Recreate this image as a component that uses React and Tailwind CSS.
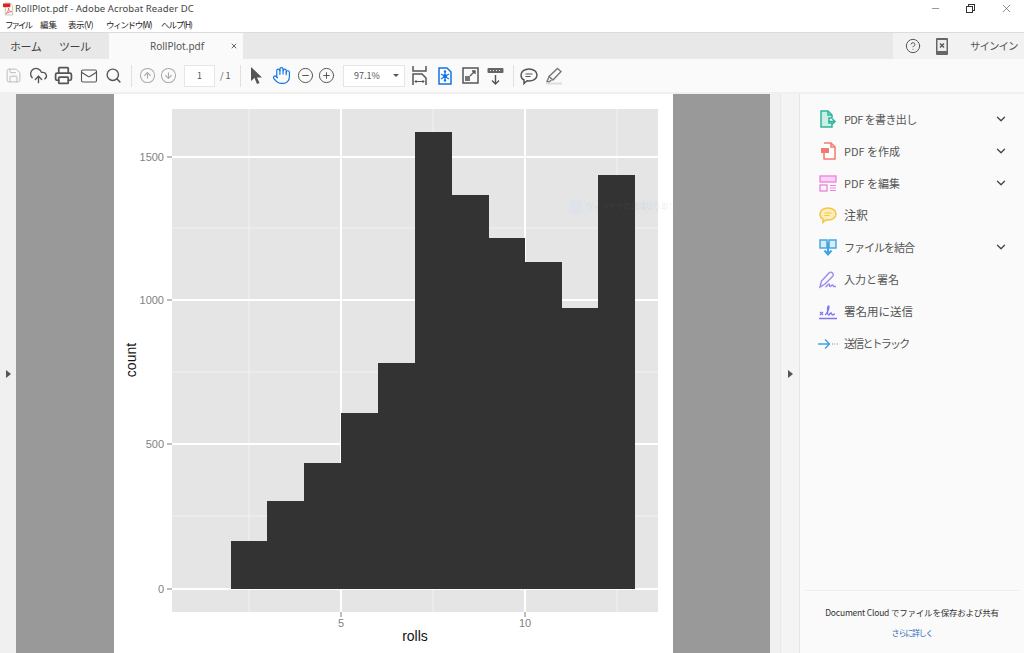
import { Save, CloudUpload, Printer, Mail, Search, CircleArrowUp, CircleArrowDown, Hand, CircleMinus, CirclePlus, CircleHelp, ChevronDown, Minus, X } from 'lucide-react'

const font = "font-['Noto_Sans_CJK_JP','Noto_Sans',sans-serif]"

const bars = [
  [231, 541], [267, 501], [304, 463], [341, 413], [378, 363], [415, 132],
  [452, 195], [489, 238], [525, 262], [562, 308], [598, 175],
]
const barEnds = [267, 304, 341, 378, 415, 452, 489, 525, 562, 598, 635]

function Chart() {
  // svg origin sits at page x=114, y=94
  const ox = 114
  const oy = 94
  return (
    <svg width="559" height="559" viewBox={`${ox} ${oy} 559 559`} className="block">
      <rect x="172" y="109" width="486" height="503" fill="#e5e5e5" />
      {[516, 372, 228].map(y => <line key={y} x1="172" x2="658" y1={y} y2={y} stroke="#f2f2f2" strokeWidth="1" />)}
      {[249, 433, 617].map(x => <line key={x} x1={x} x2={x} y1="109" y2="612" stroke="#f2f2f2" strokeWidth="1" />)}
      {[589, 444, 300, 157].map(y => <line key={y} x1="172" x2="658" y1={y} y2={y} stroke="#fff" strokeWidth="2" />)}
      {[341, 525].map(x => <line key={x} x1={x} x2={x} y1="109" y2="612" stroke="#fff" strokeWidth="2" />)}
      {/* faded window-snip tooltip left in the capture */}
      <rect x="568" y="200" width="90" height="14" fill="#e2e4e6" />
      <rect x="570" y="201" width="12" height="12" fill="#dde3e8" />
      {bars.map(([x, top], i) => (
        <rect key={x} x={x} y={top} width={barEnds[i] - x} height={589 - top} fill="#333333" />
      ))}
      <g className="opacity-[0.99]">
        {[[589, '0'], [444, '500'], [300, '1000'], [157, '1500']].map(([y, t]) => (
          <g key={t}>
            <line x1="167" x2="172" y1={y} y2={y} stroke="#7f7f7f" strokeWidth="1" />
            <text x="164" y={y + 4} textAnchor="end" fontSize="11" fill="#7f7f7f" fontFamily="Liberation Sans, sans-serif">{t}</text>
          </g>
        ))}
        {[[341, '5'], [525, '10']].map(([x, t]) => (
          <g key={t}>
            <line x1={x} x2={x} y1="612" y2="617" stroke="#7f7f7f" strokeWidth="1" />
            <text x={x} y="627" textAnchor="middle" fontSize="11" fill="#7f7f7f" fontFamily="Liberation Sans, sans-serif">{t}</text>
          </g>
        ))}
        <text x="415" y="641" textAnchor="middle" fontSize="14" fill="#111" fontFamily="Liberation Sans, sans-serif">rolls</text>
        <text transform="translate(136 360) rotate(-90)" textAnchor="middle" fontSize="14" fill="#111" fontFamily="Liberation Sans, sans-serif">count</text>
      </g>
    </svg>
  )
}

function PdfIcon() {
  return (
    <svg width="12" height="14" viewBox="0 0 12 14" fill="none">
      <path d="M2.5.5h5l3 3v10h-8z" fill="#fff" stroke="#bdbdbd" />
      <rect x="0" y="1" width="8" height="4" fill="#d8261c" />
      <path d="M3.5 12c1.5-1 2.500-3.500 2.500-6 .5 2.500 1.500 3.500 3.500 4-2 0-4 .5-6 2z" stroke="#e0483e" strokeWidth=".8" />
    </svg>
  )
}

function FitWidth() {
  return (
    <svg width="16" height="20" viewBox="0 0 16 20" fill="none" stroke="#555" strokeWidth="1.500">
      <path d="M1 0v5h13V0" />
      <path d="M1 19V8h9l4 4v7" />
      <path d="M3 15.500h9M3 15.500l1.500-1.500M3 15.500l1.500 1.500M12 15.500l-1.500-1.500M12 15.500l-1.500 1.500" strokeWidth="1" />
    </svg>
  )
}

function SnapIcon() {
  return (
    <svg width="14" height="18" viewBox="0 0 14 18" fill="none">
      <path d="M1 1h8l4 4v12H1z" fill="#fff" stroke="#1473e6" strokeWidth="1.500" />
      <path d="M7 4v10M3 7l8 5M11 7l-8 5" stroke="#1473e6" strokeWidth="1.200" />
      <circle cx="7" cy="9" r="2" fill="#1473e6" />
      <circle cx="7" cy="4.500" r="1.200" fill="#1473e6" />
      <circle cx="7" cy="13.500" r="1.200" fill="#1473e6" />
    </svg>
  )
}

function FullScreen() {
  return (
    <svg width="17" height="17" viewBox="0 0 17 17" fill="none">
      <rect x="1" y="1" width="15" height="15" stroke="#555" strokeWidth="1.500" />
      <rect x="3" y="9" width="5" height="5" fill="#777" />
      <path d="M8 9l5-5M10 4h3v3" stroke="#555" strokeWidth="1.300" />
    </svg>
  )
}

function ReadIcon() {
  return (
    <svg width="17" height="18" viewBox="0 0 17 18" fill="none">
      <rect x="0.500" y="1" width="16" height="5" rx="1" fill="#666" />
      <path d="M3 3.500h1M6 3.500h1M9 3.500h1M12 3.500h1" stroke="#eee" />
      <path d="M8.500 8v9M5 13.500l3.500 3.500 3.500-3.500" stroke="#555" strokeWidth="1.400" />
    </svg>
  )
}

function CommentIcon({ color = '#555', fill = 'none', size = 18 }) {
  return (
    <svg width={size} height={size} viewBox="0 0 18 18" fill={fill} stroke={color} strokeWidth="1.500">
      <path d="M9 2c4.400 0 8 2.400 8 6s-3.600 6-8 6c-.8 0-1.500 0-2-.2L4 16.500V13C2 12 1 10 1 8c0-3.600 3.600-6 8-6z" />
      <path d="M5.500 7h7M5.500 9.500h5" strokeWidth="1.200" />
    </svg>
  )
}

function HighlightIcon() {
  return (
    <svg width="18" height="18" viewBox="0 0 18 18" fill="none">
      <path d="M12.500 1.500l3.500 3-8 8.500-4-3.500z" stroke="#777" strokeWidth="1.400" />
      <path d="M4 10l-2 4.500 2 .5 2.500-2" stroke="#777" strokeWidth="1.400" />
      <rect x="1" y="15.500" width="16" height="2" fill="#ddd" />
    </svg>
  )
}

function PhoneIcon() {
  return (
    <svg width="12" height="17" viewBox="0 0 12 17" fill="none">
      <rect x="0" y="0" width="12" height="17" rx="1" fill="#666" />
      <rect x="1.500" y="2" width="9" height="11" fill="#eee" />
      <path d="M4 5.500l4 4M8 5.500l-4 4" stroke="#555" strokeWidth="1.400" />
    </svg>
  )
}

function ExportIcon() {
  return (
    <svg width="16" height="18" viewBox="0 0 16 18" fill="none">
      <path d="M1 1h7l4 4v3H9v5h3v4H1z" fill="#cdeee4" stroke="#2fb59a" strokeWidth="1.500" />
      <path d="M8 1v4h4" stroke="#2fb59a" strokeWidth="1.500" />
      <path d="M8 11.500h7M12.500 9l2.500 2.500-2.500 2.500" stroke="#2fb59a" strokeWidth="1.500" />
    </svg>
  )
}

function CreateIcon() {
  return (
    <svg width="15" height="18" viewBox="0 0 15 18" fill="none">
      <path d="M3 1h7l4 4v12H3v-6" fill="#fff" stroke="#f47b6c" strokeWidth="1.500" />
      <path d="M10 1v4h4" stroke="#f47b6c" strokeWidth="1.500" />
      <rect x="0" y="6" width="8" height="5" fill="#f47b6c" />
    </svg>
  )
}

function EditIcon() {
  return (
    <svg width="18" height="17" viewBox="0 0 18 17" fill="none" stroke="#f07fe0" strokeWidth="1.300">
      <rect x="1" y="1" width="16" height="6" fill="#fbd3f5" />
      <rect x="1" y="10" width="7" height="6" />
      <path d="M11 10.500h6M11 13h6M11 15.500h6" strokeWidth="1" />
    </svg>
  )
}

function CombineIcon() {
  return (
    <svg width="18" height="18" viewBox="0 0 18 18" fill="none">
      <rect x="1" y="2" width="7" height="8" fill="#d5ecfa" stroke="#3ea3e0" strokeWidth="1.400" />
      <rect x="10" y="2" width="7" height="8" fill="#d5ecfa" stroke="#3ea3e0" strokeWidth="1.400" />
      <path d="M9 4v12M5.500 12.500L9 16.500l3.500-4" stroke="#3ea3e0" strokeWidth="2" />
    </svg>
  )
}

function SignIcon() {
  return (
    <svg width="18" height="18" viewBox="0 0 18 18" fill="none" stroke="#9b86f0" strokeWidth="1.400">
      <path d="M1 16l1.500-6L10 2c1-1 2.500-1 3.500 0s1 2.500 0 3.500L6 13z" />
      <path d="M6.500 16c1.500-.5 2.500-3 3.500-3s0 2.500 1 2.500 1.500-1.500 2.500-1.500.5 1.500 1.500 1.500h2" />
    </svg>
  )
}

function SendSignIcon() {
  return (
    <svg width="18" height="16" viewBox="0 0 18 16" fill="none" stroke="#8076ee" strokeWidth="1.300">
      <path d="M1 8l3 3M4 8l-3 3" />
      <path d="M6 11c2-1 4-6 4-8s-1.500-1-1.500 2 0 6 1 6 1.500-2 2.500-2 .5 2 1.500 2 1.500-1 2.500-1" />
      <path d="M0 14.500h18" strokeWidth="1.500" />
    </svg>
  )
}

function TrackIcon() {
  return (
    <svg width="20" height="12" viewBox="0 0 20 12" fill="none">
      <path d="M0 6h11M7 1.500L11.500 6 7 10.500" stroke="#3ea3e0" strokeWidth="1.400" />
      <path d="M14 6h1M16.500 6h1M19 6h1" stroke="#8a8a8a" />
    </svg>
  )
}

const tools = [
  { icon: <ExportIcon />, label: 'PDF を書き出し', more: true, text: 'text-[11px] tracking-[-0.6px]' },
  { icon: <CreateIcon />, label: 'PDF を作成', more: true, text: 'text-[11px]' },
  { icon: <EditIcon />, label: 'PDF を編集', more: true, text: 'text-[11px]' },
  { icon: <CommentIcon color="#f5c445" fill="#fdeebc" />, label: '注釈', text: 'text-[12px]' },
  { icon: <CombineIcon />, label: 'ファイルを結合', more: true, text: 'text-[11px] tracking-[-1px]' },
  { icon: <SignIcon />, label: '入力と署名', text: 'text-[11px]' },
  { icon: <SendSignIcon />, label: '署名用に送信', text: 'text-[11.500px]' },
  { icon: <TrackIcon />, label: '送信とトラック', text: 'text-[11px] tracking-[-1.800px]' },
]

function Divider() {
  return <div className="w-px h-[22px] bg-[#e0e0e0]" />
}

export default function App() {
  return (
    <div className={`${font} w-[1024px] h-[653px] overflow-hidden bg-white flex flex-col text-[#505050]`}>
      {/* Title bar */}
      <div className="h-[17px] flex items-center">
        <div className="ml-[3px] w-[11px] flex justify-center"><PdfIcon /></div>
        <span className="ml-[1px] font-['Noto_Sans',sans-serif] text-[9.500px] tracking-[0.1px] text-[#444] leading-none">RollPlot.pdf - Adobe Acrobat Reader DC</span>
        <div className="ml-auto flex items-center text-[#444]">
          <Minus size={11} strokeWidth={1.200} className="mr-[25px]" />
          <div className="relative w-[9px] h-[9px] mr-[25px]">
            <div className="absolute left-0 bottom-0 w-[7px] h-[7px] border border-[#333] bg-white z-10" />
            <div className="absolute right-0 top-0 w-[7px] h-[7px] border border-[#333]" />
          </div>
          <X size={13} strokeWidth={1.100} className="mr-[11px]" />
        </div>
      </div>

      {/* Menu bar */}
      <div className="h-[15px] flex items-center pl-[5px] text-[8.500px] text-[#222] leading-none whitespace-nowrap">
        <span className="w-[35px] tracking-[-2px]">ファイル</span>
        <span className="w-[28px]">編集</span>
        <span className="w-[38px] tracking-[-0.500px]">表示(V)</span>
        <span className="w-[55px] tracking-[-1.300px]">ウィンドウ(W)</span>
        <span className="tracking-[-1.100px]">ヘルプ(H)</span>
      </div>

      {/* Tab bar */}
      <div className="h-[27px] flex bg-[#e8e8e8] border-t border-[#dcdcdc]">
        <div className="w-[109px] flex items-center pl-[10px] text-[11px] tracking-[-0.500px] text-[#444] leading-none">
          <span className="w-[49px]">ホーム</span>
          <span>ツール</span>
        </div>
        <div className="w-[134px] bg-[#fafafa] flex items-center text-[10px] text-[#555]">
          <span className="ml-[41px] font-['Noto_Sans',sans-serif]">RollPlot.pdf</span>
          <X size={8} strokeWidth={2.500} className="ml-auto mr-[5px] text-[#444]" />
        </div>
        <div className="flex-1" />
        <div className="w-[131px] bg-[#f2f2f2] flex items-center">
          <CircleHelp size={16} strokeWidth={1.500} className="ml-[12px] text-[#555]" />
          <div className="ml-[15px]"><PhoneIcon /></div>
          <span className="ml-[22px] text-[10.500px] tracking-[-1px] text-[#555] leading-none whitespace-nowrap">サインイン</span>
        </div>
      </div>

      {/* Toolbar */}
      <div className="h-[35px] bg-[#fafafa] border-b-2 border-[#f0f0f0] flex items-center text-[#555]">
        <Save size={17} strokeWidth={1.400} className="ml-[5px] text-[#bbb]" />
        <CloudUpload size={19} strokeWidth={1.700} className="ml-[7px]" />
        <Printer size={19} strokeWidth={2.200} className="ml-[6px]" />
        <Mail size={18} strokeWidth={1.500} className="ml-[7px]" />
        <Search size={17} strokeWidth={2} className="ml-[7px]" />
        <div className="ml-[9px]"><Divider /></div>
        <CircleArrowUp size={17} strokeWidth={1.500} className="ml-[7px] text-[#aaa]" />
        <CircleArrowDown size={17} strokeWidth={1.500} className="ml-[4px] text-[#aaa]" />
        <div className="ml-[7px] w-[31px] h-[22px] bg-white border border-[#e6e6e6] flex items-center justify-center text-[9px] text-[#555]">1</div>
        <span className="ml-[5px] text-[9px] w-[13px] whitespace-nowrap">/ 1</span>
        <div className="ml-[7px]"><Divider /></div>
        <svg width="13" height="17" viewBox="0 0 13 17" className="ml-[9px]"><path d="M1 0v14l3.500-3 2.500 6 2.500-1-2.500-5.500H12z" fill="#555" /></svg>
        <Hand size={19} strokeWidth={1.500} className="ml-[9px] text-[#1473e6]" />
        <CircleMinus size={17} strokeWidth={1.400} className="ml-[6px]" />
        <CirclePlus size={17} strokeWidth={1.400} className="ml-[4px]" />
        <div className="ml-[8px] w-[62px] h-[22px] bg-white border border-[#e6e6e6] flex items-center text-[9px] text-[#555] pl-[10px]">
          97.1%
          <span className="ml-auto mr-[5px] w-0 h-0 border-x-[3px] border-x-transparent border-t-[3px] border-t-[#555]" />
        </div>
        <div className="ml-[7px]"><FitWidth /></div>
        <div className="ml-[10px]"><SnapIcon /></div>
        <div className="ml-[10px]"><FullScreen /></div>
        <div className="ml-[8px]"><ReadIcon /></div>
        <div className="ml-[9px]"><Divider /></div>
        <div className="ml-[6px]"><CommentIcon /></div>
        <div className="ml-[7px]"><HighlightIcon /></div>
      </div>

      {/* Main */}
      <div className="relative flex-1 min-h-0 flex">
        <div className="w-4 bg-[#f0f0f0] flex items-center justify-center">
          <span className="w-0 h-0 border-y-[4px] border-y-transparent border-l-[5px] border-l-[#555]" />
        </div>
        <div className="w-[754px] bg-[#999999] flex justify-center overflow-hidden">
          <div className="w-[559px] h-[559px] bg-white shrink-0">
            <Chart />
          </div>
        </div>
        <div className="w-[11px] bg-[#f0f0f0] border-r border-[#e8e8e8]" />
        <div className="w-[19px] bg-[#f4f4f4] border-r border-[#e4e4e4] flex items-center justify-center">
          <span className="w-0 h-0 border-y-[4px] border-y-transparent border-l-[5px] border-l-[#555]" />
        </div>
        <aside className="flex-1 bg-[#fafafa] flex flex-col">
          <div className="pt-[9px]">
            {tools.map(tool => (
              <div key={tool.label} className="h-[32.100px] flex items-center pl-[18px] pr-[16px]">
                <div className="w-[20px] flex justify-center">{tool.icon}</div>
                <span className={`ml-[6px] text-[#555] leading-none ${tool.text}`}>{tool.label}</span>
                {tool.more && <ChevronDown size={14} strokeWidth={2.200} className="ml-auto text-[#444]" />}
              </div>
            ))}
          </div>
          <div className="mt-auto mx-[5px] h-[63px] border-t border-[#eeeeee] flex flex-col items-center">
            <span className="mt-[17px] text-[8.500px] tracking-[-0.200px] text-[#333] leading-none whitespace-nowrap">Document Cloud でファイルを保存および共有</span>
            <span className="mt-[12px] text-[8px] tracking-[-1.200px] text-[#2d6fb8] leading-none">さらに詳しく</span>
          </div>
        </aside>
        {/* faded tooltip text lying over the page */}
        <span className="absolute left-[586px] top-[108px] text-[7.500px] leading-none whitespace-nowrap text-[#8a8a8a]/15">ウィンドウの領域切り取り(W)</span>
      </div>
    </div>
  )
}
